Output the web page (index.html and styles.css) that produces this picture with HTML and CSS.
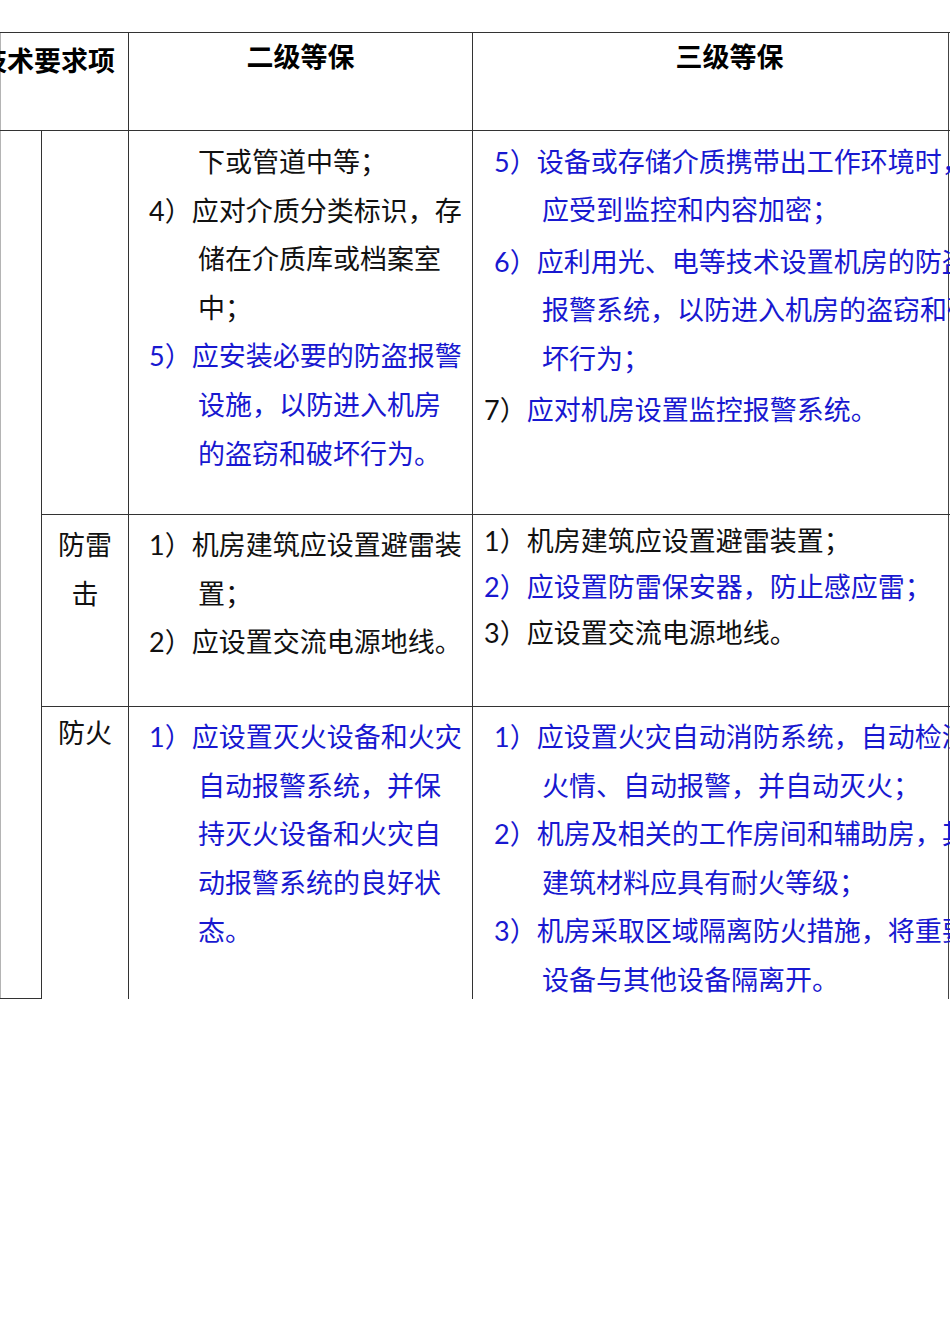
FILE: index.html
```html
<!DOCTYPE html>
<html lang="zh-CN">
<head>
<meta charset="utf-8">
<title>等级保护技术要求对照</title>
<link rel="stylesheet" href="styles.css">
</head>
<body>
<div class="frame">
  <table class="req">
    <colgroup>
      <col class="col-a">
      <col class="col-b">
      <col class="col-2">
      <col class="col-3">
    </colgroup>
    <tr class="row-head">
      <th colspan="2" class="h-item">技术要求项</th>
      <th class="h-lvl">二级等保</th>
      <th class="h-lvl">三级等保</th>
    </tr>
    <tr class="row-1">
      <td rowspan="3" class="cat"></td>
      <td class="sub"></td>
      <td class="c2 r1">
        <p class="cont">下或管道中等；</p>
        <p class="hang">4）应对介质分类标识，存储在介质库或档案室中；</p>
        <p class="hang blue">5）应安装必要的防盗报警设施，以防进入机房的盗窃和破坏行为。</p>
      </td>
      <td class="c3 r1">
        <p class="hang3 blue gap">5）设备或存储介质携带出工作环境时，应受到监控和内容加密；</p>
        <p class="hang3 blue gap">6）应利用光、电等技术设置机房的防盗报警系统，以防进入机房的盗窃和破坏行为；</p>
        <p class="plain">7）<span class="blue">应对机房设置监控报警系统。</span></p>
      </td>
    </tr>
    <tr class="row-2">
      <td class="sub r2">防雷击</td>
      <td class="c2 r2">
        <p class="hang">1）机房建筑应设置避雷装置；</p>
        <p class="hang">2）应设置交流电源地线。</p>
      </td>
      <td class="c3 r2">
        <p class="plain">1）机房建筑应设置避雷装置；</p>
        <p class="plain blue">2）应设置防雷保安器，防止感应雷；</p>
        <p class="plain">3）应设置交流电源地线。</p>
      </td>
    </tr>
    <tr class="row-3">
      <td class="sub r3 last">防火</td>
      <td class="c2 r3 last">
        <p class="hang blue">1）应设置灭火设备和火灾自动报警系统，并保持灭火设备和火灾自动报警系统的良好状态。</p>
      </td>
      <td class="c3 r3 last">
        <p class="hang3 blue">1）应设置火灾自动消防系统，自动检测火情、自动报警，并自动灭火；</p>
        <p class="hang3 blue">2）机房及相关的工作房间和辅助房，其建筑材料应具有耐火等级；</p>
        <p class="hang3 blue">3）机房采取区域隔离防火措施，将重要设备与其他设备隔离开。</p>
      </td>
    </tr>
  </table>
</div>
</body>
</html>
```

FILE: styles.css
```css
html, body {
  margin: 0;
  padding: 0;
  overflow: hidden;
  background: #ffffff;
}

body {
  font-family: Lato, "Noto Sans CJK SC", sans-serif;
  font-size: 27px;
  color: #111111;
  width: 950px;
  height: 1344px;
}

.frame {
  margin-top: 32px;
  width: 947px;
  border-left: 1px solid #b4b4b4;
  border-right: 1px solid #444444;
}

.req {
  margin-left: -35px;
  width: 1020px;
  table-layout: fixed;
  border-collapse: collapse;
}

.col-a { width: 75px; }
.col-b { width: 87px; }
.col-2 { width: 344px; }
.col-3 { width: 514px; }

.req th,
.req td {
  border: 1px solid #333333;
  vertical-align: top;
  padding: 0;
  line-height: 48.6px;
}

.req td.last {
  border-bottom: none;
}

.row-head { height: 98px; }
.row-1 { height: 384px; }
.row-2 { height: 192px; }
.row-3 { height: 292px; }

.req th.h-item,
.req th.h-lvl {
  font-weight: bold;
  text-align: center;
  white-space: nowrap;
  color: #000000;
}

.req th.h-item {
  padding-top: 4px;
  padding-left: 0;
}

.req th.h-lvl {
  padding-top: 0;
}

.req td.sub {
  text-align: center;
  padding: 0 6px;
}

.req td.sub.r2 { padding-top: 6px; }
.req td.sub.r3 { padding-top: 2px; }

.req td.c2 {
  padding: 0 6px 0 20px;
}

.req td.c3 {
  padding: 0 1px 0 11px;
}

.req td.c2.r1,
.req td.c3.r1 { padding-top: 7px; }
.req td.c2.r2 { padding-top: 6px; }
.req td.c3.r2 { padding-top: 3px; }
.req td.c2.r3,
.req td.c3.r3 { padding-top: 6px; }

.req p {
  margin: 0;
}

.req .cont {
  padding-left: 49px;
}

.req .hang {
  padding-left: 49px;
  text-indent: -49px;
}

.req .hang3 {
  margin-left: 10px;
  padding-left: 48px;
  text-indent: -48px;
}

.req td.c3.r1 p {
  line-height: 48.3px;
}

.req td.c3.r1 .gap {
  margin-bottom: 3.5px;
}

.req td.c3.r2 p {
  line-height: 46px;
}

.req td.c3.r3 p:last-child {
  margin-bottom: -12px;
}

.blue {
  color: #1818d0;
}
```
